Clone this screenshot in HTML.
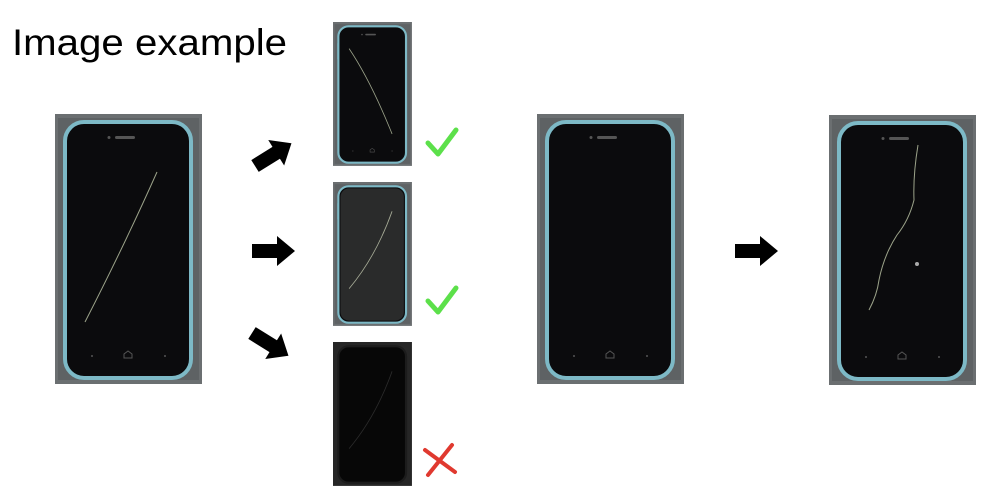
<!DOCTYPE html>
<html><head><style>
html,body{margin:0;padding:0;background:#fff;width:986px;height:494px;overflow:hidden}
svg{position:absolute;left:0;top:0}
</style></head><body>
<svg width="986" height="494" viewBox="0 0 986 494" xmlns="http://www.w3.org/2000/svg">
<defs>
<g id="phone">
  <rect x="0" y="0" width="147" height="270" fill="#6b6f71"/>
  <rect x="3" y="4" width="141" height="262" fill="#5e6264"/>
  <rect x="10" y="8" width="126" height="256" rx="19" fill="#0b0b0d" stroke="#7db9c6" stroke-width="4"/>
  <rect x="8" y="40" width="2" height="30" fill="#7db9c6"/>
  <rect x="60" y="22" width="20" height="3" rx="1.5" fill="#555"/>
  <circle cx="54" cy="23.5" r="1.5" fill="#555"/>
  <path d="M69 244 v-4 l4-3 l4 3 v4 z" fill="none" stroke="#555" stroke-width="1"/>
  <circle cx="37" cy="242" r="1" fill="#555"/>
  <circle cx="110" cy="242" r="1" fill="#555"/>
</g>
<path id="arrow" d="M0 -7 H25 V-15 L43 0 L25 15 V7 H0 Z" fill="#000"/>
</defs>
<text x="12" y="55" font-family="Liberation Sans, sans-serif" font-size="37" fill="#000" textLength="275" lengthAdjust="spacingAndGlyphs">Image example</text>

<g transform="translate(55,114)">
  <use href="#phone"/>
  <path d="M30 208 Q70 130 102 58" stroke="#9ca38a" stroke-width="1" fill="none"/>
</g>
<g transform="translate(333,22) scale(0.537,0.533)">
  <use href="#phone"/>
  <path d="M30 50 Q70 110 110 210" stroke="#9ca38a" stroke-width="1.5" fill="none"/>
</g>
<g transform="translate(333,182) scale(0.537,0.533)">
  <use href="#phone"/>
  <rect x="14" y="12" width="118" height="248" rx="16" fill="#2a2b2b"/>
  <path d="M30 200 Q80 140 110 55" stroke="#a8ad98" stroke-width="1.5" fill="none"/>
</g>
<g transform="translate(333,342) scale(0.537,0.533)">
  <rect x="0" y="0" width="147" height="270" fill="#262626"/>
  <rect x="10" y="8" width="126" height="256" rx="19" fill="#070707" stroke="#1c1c1c" stroke-width="4"/>
  <path d="M30 200 Q80 140 110 55" stroke="#2c2c2c" stroke-width="1.5" fill="none"/>
</g>
<path d="M428 143 L438 154 L456 130" stroke="#5ce04a" stroke-width="5" fill="none" stroke-linecap="round" stroke-linejoin="round"/>
<path d="M428 301 L438 312 L456 288" stroke="#5ce04a" stroke-width="5" fill="none" stroke-linecap="round" stroke-linejoin="round"/>
<path d="M425 450 L455 472 M452 445 L428 475" stroke="#e0392f" stroke-width="4" fill="none" stroke-linecap="round"/>
<use href="#arrow" transform="translate(255,166) rotate(-32)"/>
<use href="#arrow" transform="translate(252,251)"/>
<use href="#arrow" transform="translate(252,333) rotate(32)"/>
<use href="#arrow" transform="translate(735,251)"/>
<g transform="translate(537,114)"><use href="#phone"/></g>
<g transform="translate(829,115)">
  <use href="#phone"/>
  <path d="M89 30 Q84 60 85 85 Q80 105 68 120 Q55 140 50 165 Q48 180 40 195" stroke="#9ca38a" stroke-width="1" fill="none"/>
  <circle cx="88" cy="149" r="2" fill="#aaa"/>
</g>
</svg>
</body></html>
